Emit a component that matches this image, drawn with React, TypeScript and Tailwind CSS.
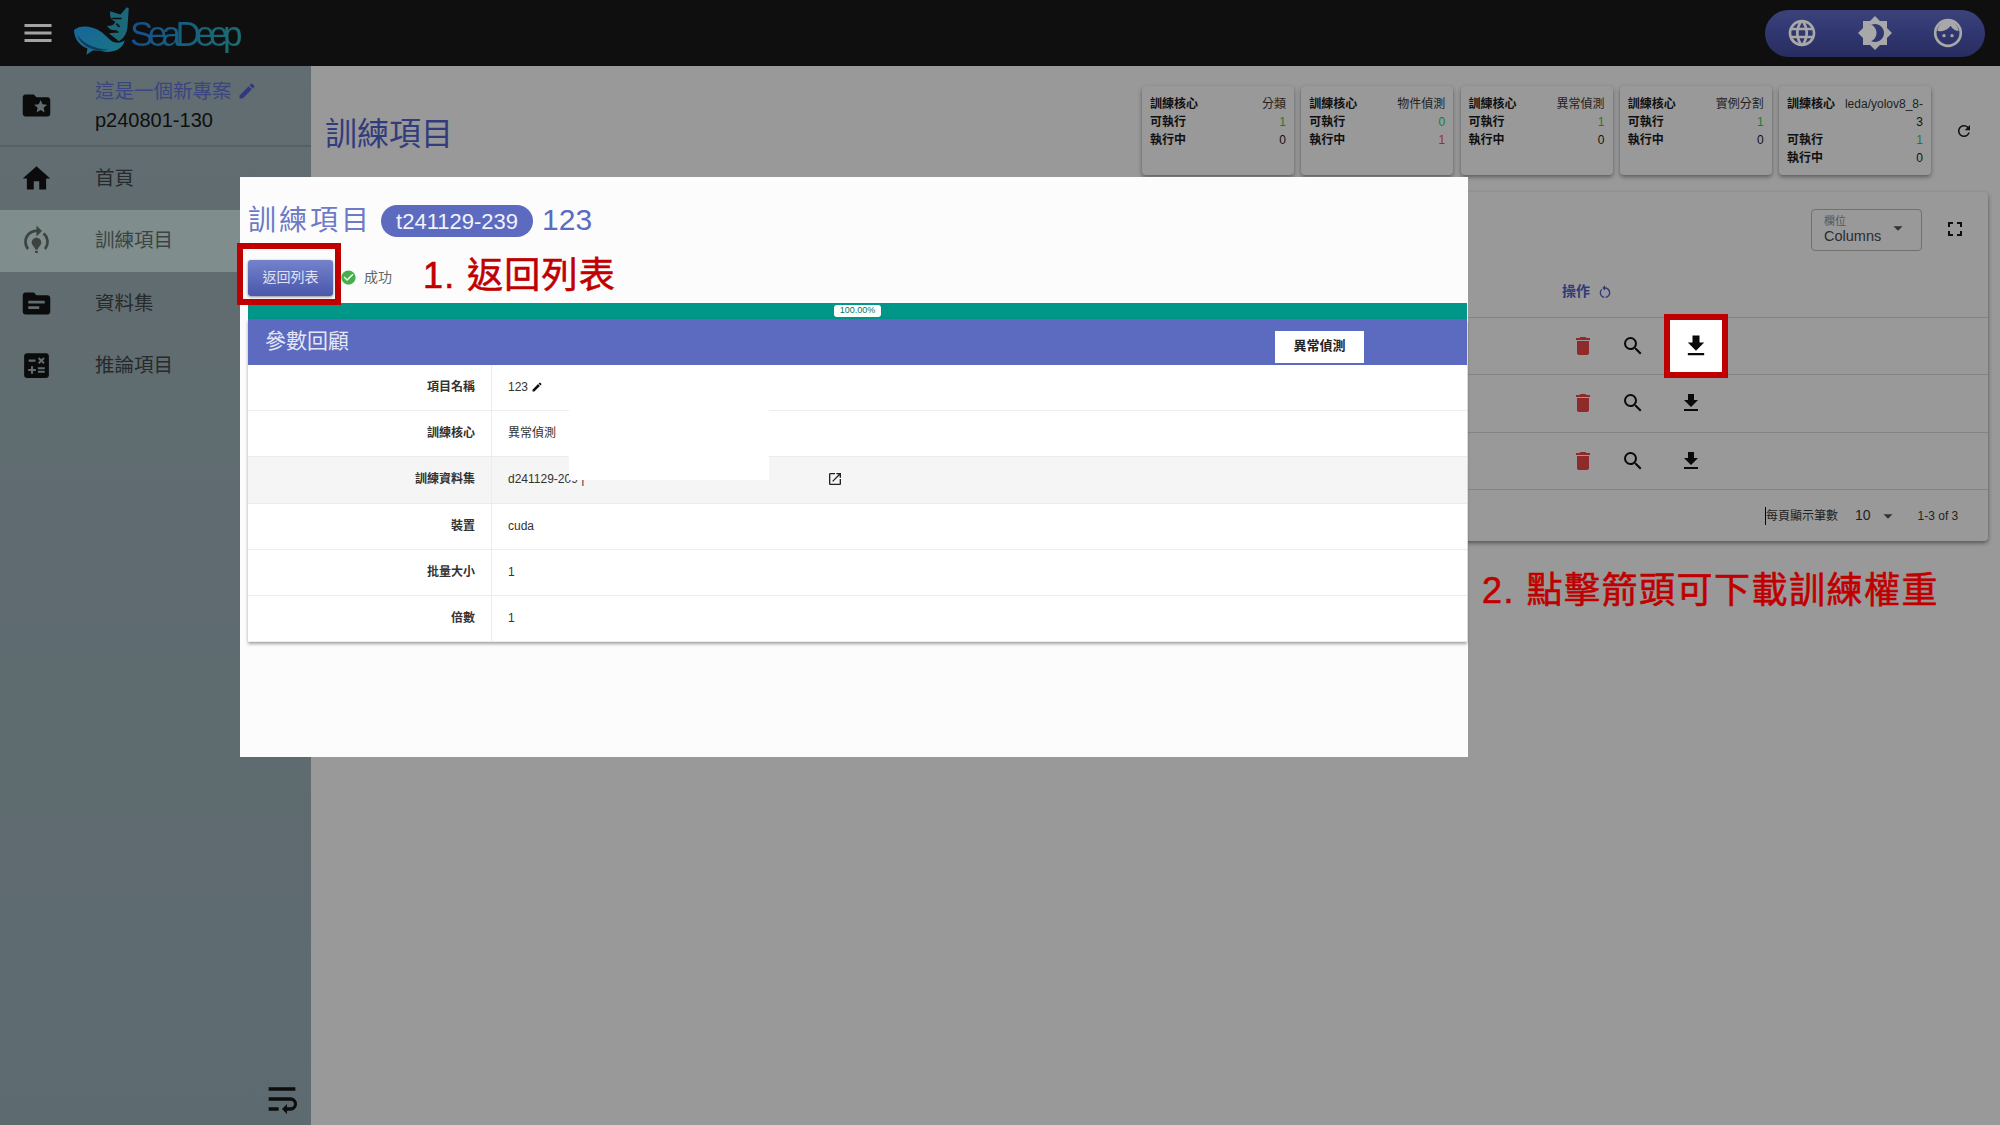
import {
  MdArrowDropDown,
  MdBrightness4,
  MdCalculate,
  MdCheckCircle,
  MdDelete,
  MdEdit,
  MdFileDownload,
  MdFolderSpecial,
  MdFullscreen,
  MdHome,
  MdLanguage,
  MdMenu,
  MdModelTraining,
  MdOpenInNew,
  MdRefresh,
  MdRestartAlt,
  MdSearch,
  MdTopic,
  MdWrapText,
} from "react-icons/md";

const navItems = [
  { label: "首頁", icon: MdHome },
  { label: "訓練項目", icon: MdModelTraining, active: true },
  { label: "資料集", icon: MdTopic },
  { label: "推論項目", icon: MdCalculate },
];

const statCards = [
  { core: "分類", ready: "1", running: "0" },
  { core: "物件偵測", ready: "0", running: "1", busy: true },
  { core: "異常偵測", ready: "1", running: "0" },
  { core: "實例分割", ready: "1", running: "0" },
  { core: "leda/yolov8_8-", extra: "3", ready: "1", running: "0" },
];

const params = [
  { label: "項目名稱", value: "123", edit: true },
  { label: "訓練核心", value: "異常偵測" },
  { label: "訓練資料集", value: "d241129-209 |", link: true, shaded: true },
  { label: "裝置", value: "cuda" },
  { label: "批量大小", value: "1" },
  { label: "倍數", value: "1" },
];

function Logo() {
  return (
    <div className="ml-[17px] flex items-center">
      <svg width="62" height="52" viewBox="0 0 60 50">
        <defs>
          <linearGradient id="whale" x1="0" y1="0" x2="1" y2="1">
            <stop offset="0" stopColor="#17659b" />
            <stop offset="1" stopColor="#1a7680" />
          </linearGradient>
        </defs>
        <path
          d="M1 22c6-5 17-4 25 1 5 3 9 9 14 11 4 1 8 0 10-2-1 6-6 10-13 11-4 1-8 0-11-1l-7 0-6 4 1-6C6 37 1 30 1 22z"
          fill="url(#whale)"
        />
        <path d="M4 27c7 9 18 14 31 14-12 3-26-1-31-14z" fill="#123c5c" />
        <path
          d="M36 4l10 3 6-7 2 1-1 14c0 9-3 15-9 18-2-3-6-4-9-8 4 0 7-1 8-3-4 1-8 0-10-4 4 0 7-1 8-4-3-1-6-4-5-10z"
          fill="#1b6878"
        />
        <path d="M38 11h9M36 24h8M42 16l3 3" stroke="#0f0f0f" strokeWidth="1.6" fill="none" />
      </svg>
      <span className="-ml-[5px] mt-[2px] bg-gradient-to-r from-[#174f8c] to-[#1b6f72] bg-clip-text pr-[6px] text-[35px] leading-[44px] tracking-[-5.6px] text-transparent">
        SeaDeep
      </span>
    </div>
  );
}

function FaceIcon() {
  return (
    <svg width="32" height="32" viewBox="0 0 24 24" className="text-[#a8a8a8]">
      <circle cx="12" cy="12" r="9.6" fill="none" stroke="currentColor" strokeWidth="2" />
      <path
        d="M4 10.5c3.5.5 7.5-.5 10-4 1 2 3 3.6 6 4C19.5 6 16 2.8 12 2.8 8 2.8 4.6 6 4 10.5z"
        fill="currentColor"
      />
      <circle cx="9" cy="14" r="1.25" fill="currentColor" />
      <circle cx="15" cy="14" r="1.25" fill="currentColor" />
    </svg>
  );
}

function Header() {
  return (
    <header className="flex h-[66px] items-center justify-between bg-[#0f0f0f] pr-[15px]">
      <div className="flex items-center">
        <MdMenu className="ml-[20px] text-[#a3a3a3]" size={36} />
        <Logo />
      </div>
      <div className="flex h-[47px] w-[220px] items-center justify-between rounded-full bg-gradient-to-b from-[#3c4279] via-[#303670] to-[#282d60] px-[21px]">
        <MdLanguage className="text-[#a8a8a8]" size={32} />
        <MdBrightness4 className="text-[#a8a8a8]" size={36} />
        <FaceIcon />
      </div>
    </header>
  );
}

function Sidebar() {
  return (
    <aside className="flex w-[311px] shrink-0 flex-col bg-gradient-to-b from-[#616d71] to-[#5d6a6f]">
      <div className="flex h-[81px] items-center border-b-2 border-[#565f63]">
        <MdFolderSpecial className="ml-[20px] text-[#0b0b0b]" size={33} />
        <div className="ml-[42px]">
          <div className="flex items-center text-[19.5px] leading-[26px] text-[#3b4580]">
            這是一個新專案
            <MdEdit className="ml-[5px] text-[#2f3a7c]" size={20} />
          </div>
          <div className="mt-[3px] text-[20px] leading-[26px] text-[#0f0f0f]">p240801-130</div>
        </div>
      </div>
      {navItems.map((item) => {
        const Icon = item.icon;
        return (
          <div
            key={item.label}
            className={`flex h-[62.5px] items-center ${item.active ? "bg-[#7f8d8c]" : ""}`}
          >
            <Icon
              className={`ml-[20px] ${item.active ? "text-[#3f4340]" : "text-[#0b0b0b]"}`}
              size={33}
            />
            <span
              className={`ml-[42px] text-[19.5px] ${item.active ? "text-[#3c4443]" : "text-[#262a2c]"}`}
            >
              {item.label}
            </span>
          </div>
        );
      })}
      <div className="mt-auto flex justify-end pb-[6px] pr-[9px]">
        <MdWrapText className="text-[#0d0d0d]" size={40} />
      </div>
    </aside>
  );
}

function StatCard({ card }: { card: (typeof statCards)[number] }) {
  return (
    <div className="h-[89px] w-[152px] overflow-visible rounded-[4px] bg-[#999999] px-[8px] pt-[9px] text-[12px] leading-[18px] text-[#111] shadow-[0_2px_4px_rgba(0,0,0,0.4)]">
      <div className="flex justify-between whitespace-nowrap">
        <b>訓練核心</b>
        <span className="text-[#1f1f1f]">{card.core}</span>
      </div>
      {card.extra && <div className="text-right">{card.extra}</div>}
      <div className="flex justify-between">
        <b>可執行</b>
        <span className="text-[#1d7a2c]">{card.ready}</span>
      </div>
      <div className="flex justify-between">
        <b>執行中</b>
        <span className={card.busy ? "text-[#9c2f2f]" : ""}>{card.running}</span>
      </div>
    </div>
  );
}

function JobsTable() {
  return (
    <section className="ml-[14px] mr-[12px] mt-[17px] h-[349px] rounded-[4px] bg-[#999999] shadow-[0_2px_4px_rgba(0,0,0,0.45)]">
      <div className="flex h-[73px] items-start justify-end pr-[21px] pt-[17px]">
        <div className="flex h-[42px] w-[111px] items-center justify-between rounded-[4px] border border-[#707070] pl-[12px] pr-[12px]">
          <div>
            <div className="text-[11px] leading-[12px] text-[#555]">欄位</div>
            <div className="text-[14.5px] leading-[18px] text-[#2c2c2c]">Columns</div>
          </div>
          <MdArrowDropDown className="mb-[4px] text-[#333]" size={22} />
        </div>
        <MdFullscreen className="ml-[21px] mt-[8px] text-[#0d0d0d]" size={24} />
      </div>
      <div className="flex h-[53px] items-center border-b border-[#838383] pl-[1237px] text-[14px] font-bold text-[#313a78]">
        操作
        <MdRestartAlt className="ml-[7px] mt-[2px]" size={16} />
      </div>
      {[0, 1, 2].map((row) => (
        <div key={row} className="flex h-[57.3px] items-center border-b border-[#838383] pl-[1246px]">
          <MdDelete className="mr-[26px] text-[#8e2a2a]" size={24} />
          <MdSearch className="mr-[34px] text-[#0a0a0a]" size={24} />
          <MdFileDownload className="text-[#0a0a0a]" size={24} />
        </div>
      ))}
      <div className="flex h-[52px] items-center pl-[1440px] text-[12px] text-[#1f1f1f]">
        <span className="w-[90px] whitespace-nowrap border-l border-black">每頁顯示筆數</span>
        <span className="text-[14px]">10</span>
        <MdArrowDropDown className="ml-[6px] text-[#333]" size={22} />
        <span className="ml-[19px]">1-3 of 3</span>
      </div>
    </section>
  );
}

function ResultPanel() {
  return (
    <div className="absolute left-[240px] top-[177px] h-[580px] w-[1228px] bg-[#fcfcfc] pl-[8px] pr-[1px]">
      <div className="flex h-[66px] items-center pt-[22px]">
        <h2 className="text-[28px] tracking-[3px] text-[#6d7ac6]">訓練項目</h2>
        <span className="ml-[9px] flex h-[32px] w-[152px] items-center justify-center rounded-full bg-[#5c6bc0] text-[22px] text-[#f1f2fa]">
          t241129-239
        </span>
        <span className="ml-[9px] mb-[3px] text-[30px] text-[#5c6bc0]">123</span>
      </div>
      <div className="flex h-[60px] items-center pb-[1px] pt-[10px]">
        <button
          type="button"
          className="h-[36px] w-[85px] rounded-[3px] bg-gradient-to-b from-[#7582cb] to-[#4a57ab] text-[14px] text-[#dfe2f4] shadow-[0_1px_3px_rgba(0,0,0,0.45)]"
        >
          返回列表
        </button>
        <MdCheckCircle className="ml-[7px] text-[#43b04a]" size={17} />
        <span className="ml-[7px] text-[14px] text-[#666]">成功</span>
      </div>
      <div className="flex h-[16px] items-center justify-center bg-[#009688]">
        <span className="flex h-[12px] w-[47px] items-center justify-center rounded-[3px] bg-white text-[9px] text-[#00796b]">
          100.00%
        </span>
      </div>
      <div className="shadow-[0_2px_3px_rgba(0,0,0,0.35)]">
        <div className="flex h-[46px] items-center justify-between bg-[#5c6bc0] pl-[17px] pr-[103px]">
          <span className="mb-[2px] text-[21px] text-[#e4e6f5]">參數回顧</span>
          <span className="mt-[10px] flex h-[32px] w-[89px] items-center justify-center bg-white pb-[2px] text-[13px] font-bold text-[#222]">
            異常偵測
          </span>
        </div>
        {params.map((param) => (
          <div
            key={param.label}
            className={`flex h-[46.2px] items-stretch border-b border-[#ececec] text-[12px] ${param.shaded ? "bg-[#f5f5f5]" : "bg-white"}`}
          >
            <div className="flex w-[244px] items-center justify-end border-r border-[#ececec] pb-[1px] pr-[16px] font-bold text-[#333]">
              {param.label}
            </div>
            <div className="relative flex flex-1 items-center pb-[1px] pl-[16px] text-[#333]">
              {param.value}
              {param.edit && <MdEdit className="ml-[3px] text-[#111]" size={12} />}
              {param.link && (
                <MdOpenInNew className="absolute left-[335px] text-[#222]" size={16} />
              )}
            </div>
          </div>
        ))}
      </div>
      {/* redacted value */}
      <div className="absolute left-[329px] top-[233px] h-[70px] w-[200px] bg-white" />
    </div>
  );
}

export default function App() {
  return (
    <div
      className="relative flex h-[1125px] w-[2000px] flex-col overflow-hidden bg-[#999999]"
      style={{ fontFamily: '"Liberation Sans", "Noto Sans CJK TC", sans-serif' }}
    >
      <Header />
      <div className="flex flex-1">
        <Sidebar />
        <main className="flex-1">
          <div className="flex items-center justify-between pl-[14px] pr-[26px] pt-[20px]">
            <h1 className="mt-[6px] text-[32px] text-[#323c7c]">訓練項目</h1>
            <div className="flex items-center">
              <div className="flex gap-[7.25px]">
                {statCards.map((card) => (
                  <StatCard key={card.core} card={card} />
                ))}
              </div>
              <MdRefresh className="ml-[24px] mr-[1px] text-[#111]" size={18} />
            </div>
          </div>
          <JobsTable />
        </main>
      </div>

      <ResultPanel />

      {/* annotations */}
      <div className="absolute left-[237px] top-[243px] h-[62px] w-[104px] border-[6px] border-[#c00000]" />
      <div className="absolute left-[423px] top-[251px] text-[36px] leading-[50px] tracking-[1.3px] text-[#c00000] [-webkit-text-stroke:0.6px_#c00000]">
        1. 返回列表
      </div>
      <div className="absolute left-[1664px] top-[314px] flex h-[64px] w-[64px] items-center justify-center border-[6px] border-[#c00000] bg-white">
        <MdFileDownload className="-ml-[1px] text-[#0a0a0a]" size={28} />
      </div>
      <div className="absolute left-[1482px] top-[566px] whitespace-nowrap text-[36px] leading-[50px] tracking-[1.5px] text-[#c00000] [-webkit-text-stroke:0.6px_#c00000]">
        2. 點擊箭頭可下載訓練權重
      </div>
    </div>
  );
}
